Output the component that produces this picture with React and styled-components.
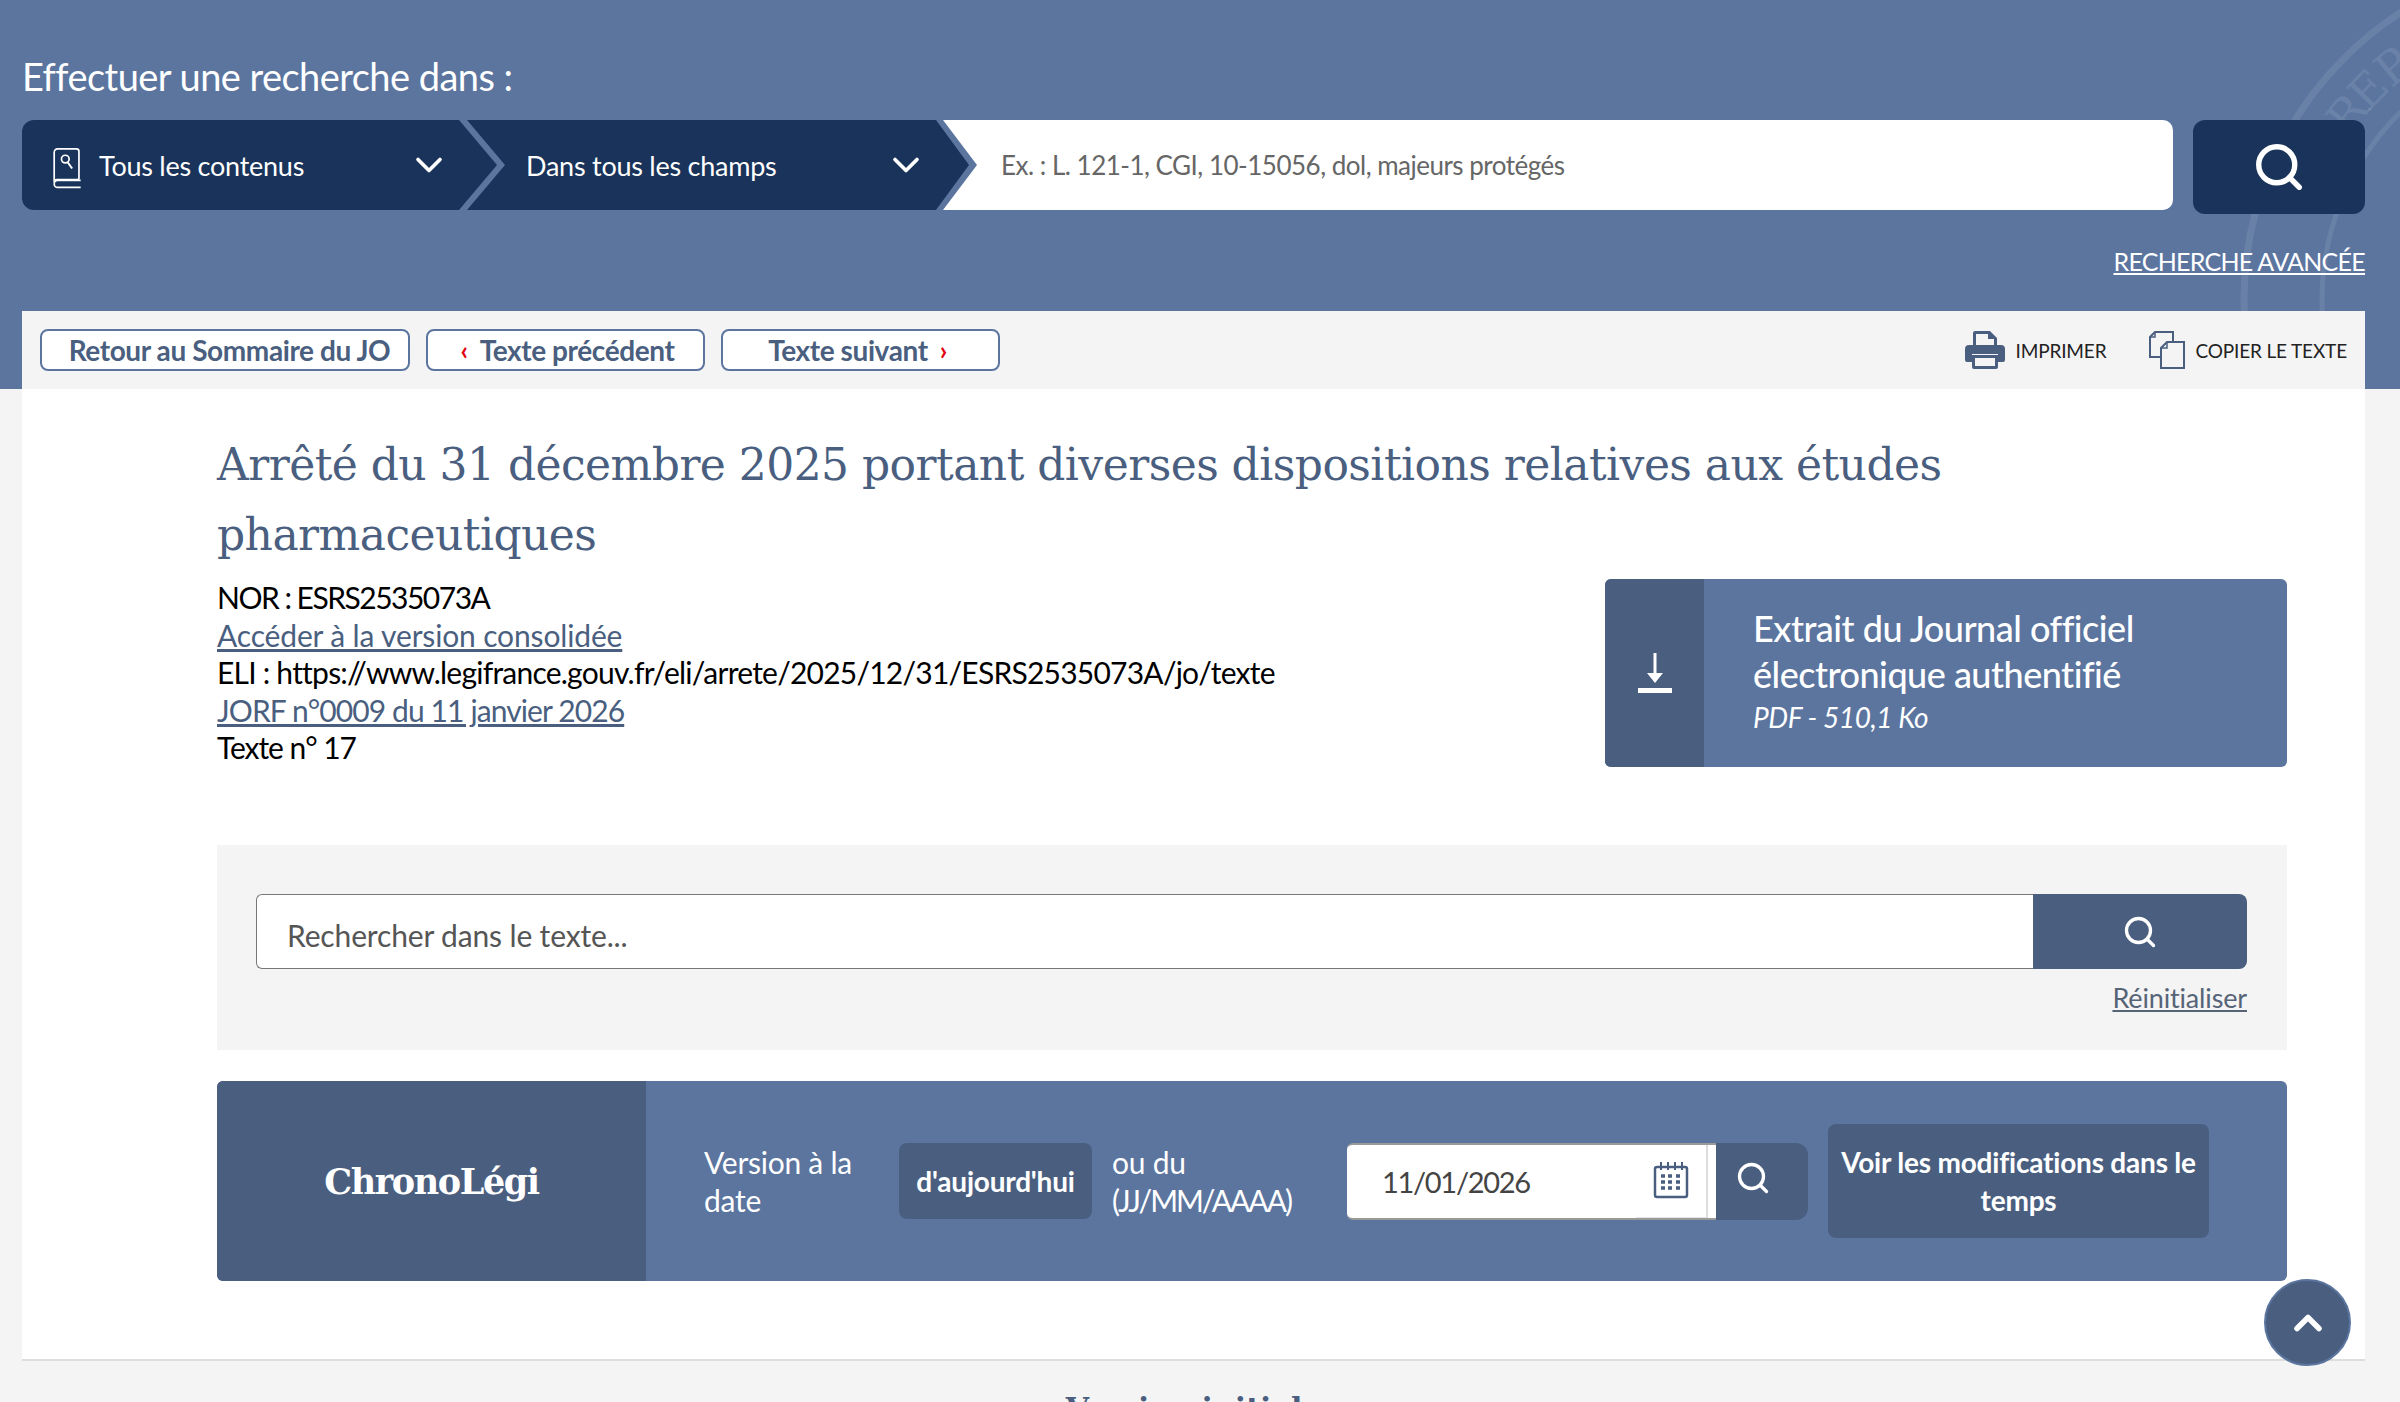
import React from 'react';
import styled, { createGlobalStyle } from 'styled-components';
import { ChevronDown, ChevronUp, Search } from 'lucide-react';

const blue = '#5b759f';
const slate = '#4a5f80';
const navy = '#19335a';
const pale = '#f4f4f4';

const sealLetters = [['R', 38], ['E', 44], ['P', 50.4]];

const GlobalStyle = createGlobalStyle`
    html, body {
        margin: 0;
        padding: 0;
        background: ${pale};
    }
    * {
        box-sizing: border-box;
    }
`;

const Page = styled.div`
    position: relative;
    width: 2400px;
    height: 1402px;
    overflow: hidden;
    background: ${pale};
    font-family: Lato, "Noto Sans", sans-serif;
`;

const Header = styled.header`
    position: relative;
    height: 389px;
    padding: 53px 0 0 22px;
    background: ${blue};
    display: flex;
    flex-direction: column;
    overflow: hidden;
`;

const Seal = styled.svg`
    position: absolute;
    top: 0;
    left: 2200px;
    width: 200px;
    height: 389px;
    fill: none;
    stroke: rgba(255, 255, 255, 0.09);
`;

const SealText = styled.text`
    fill: rgba(255, 255, 255, 0.1);
    stroke: none;
    font-family: "DejaVu Serif", serif;
    font-size: 46px;
    text-anchor: middle;
`;

const Heading = styled.h2`
    position: relative;
    margin: 0;
    height: 46px;
    font-size: 38px;
    line-height: 46px;
    font-weight: 400;
    letter-spacing: -0.55px;
    color: #fff;
`;

const SearchRow = styled.div`
    position: relative;
    display: flex;
    align-items: flex-start;
    margin-top: 21px;
    width: 2343px;
`;

const Segment = styled.div`
    display: flex;
    align-items: center;
    flex: none;
    height: 90px;
    width: ${(p) => p.$width}px;
    margin-left: ${(p) => (p.$first ? 0 : -30)}px;
    padding: 0 ${(p) => p.$right}px 0 ${(p) => p.$left}px;
    background: ${navy};
    color: #fff;
    font-size: 27px;
    letter-spacing: -0.25px;
    border-radius: ${(p) => (p.$first ? '12px 0 0 12px' : 0)};
    clip-path: ${(p) => (p.$first
        ? 'polygon(0 0, calc(100% - 38px) 0, 100% 50%, calc(100% - 38px) 100%, 0 100%)'
        : 'polygon(0 0, calc(100% - 33px) 0, 100% 50%, calc(100% - 33px) 100%, 0 100%, 38px 50%)')};
    svg.book {
        margin-top: 6px;
    }
`;

const SegmentLabel = styled.span`
    flex: 1;
    margin-left: ${(p) => p.$gap || 0}px;
`;

const QueryInput = styled.input`
    flex: 1;
    height: 90px;
    margin-left: -26px;
    padding: 0 0 0 58px;
    border: 0;
    border-radius: 0 10px 10px 0;
    background: #fff;
    font-family: inherit;
    font-size: 26px;
    letter-spacing: -0.5px;
    clip-path: polygon(0 0, 100% 0, 100% 100%, 0 100%, 34px 50%);
    &::placeholder {
        color: #666;
        opacity: 1;
    }
`;

const GoButton = styled.button`
    flex: none;
    width: 172px;
    height: 94px;
    margin-left: 20px;
    border: 0;
    border-radius: 12px;
    background: ${navy};
    color: #fff;
    display: flex;
    align-items: center;
    justify-content: center;
`;

const AdvancedLink = styled.a`
    position: relative;
    align-self: flex-end;
    margin: 30px 35px 0 0;
    font-size: 25px;
    line-height: 34px;
    letter-spacing: -0.73px;
    color: #fff;
    text-decoration: underline;
`;

const Toolbar = styled.div`
    position: relative;
    display: flex;
    align-items: center;
    width: 2343px;
    height: 78px;
    margin-top: auto;
    padding: 0 18px;
    background: ${pale};
`;

const PillButton = styled.a`
    display: flex;
    align-items: center;
    justify-content: center;
    gap: 12px;
    width: ${(p) => p.$width}px;
    height: 42px;
    margin-right: 16px;
    padding: ${(p) => p.$pad || '0'};
    border: 2px solid ${blue};
    border-radius: 8px;
    background: #fff;
    color: ${slate};
    font-size: 28px;
    font-weight: 700;
    letter-spacing: -0.4px;
`;

const RedArrow = styled.span`
    color: #e1000f;
    font-size: 26px;
    font-weight: 700;
`;

const ToolLink = styled.a`
    display: flex;
    align-items: center;
    gap: 10px;
    margin-left: ${(p) => p.$gap || 0}px;
    color: #222;
    font-size: 19px;
    letter-spacing: -0.15px;
`;

const Spacer = styled.div`
    flex: 1;
`;

const Main = styled.main`
    width: 2343px;
    height: 970px;
    margin-left: 22px;
    padding: 41px 78px 0 195px;
    background: #fff;
`;

const Title = styled.h1`
    margin: 0;
    width: 1800px;
    font-family: "DejaVu Serif", serif;
    font-size: 44px;
    line-height: 70px;
    font-weight: 400;
    letter-spacing: -0.55px;
    color: ${slate};
`;

const MetaRow = styled.div`
    display: flex;
    justify-content: space-between;
    margin-top: 9px;
`;

const Meta = styled.div`
    font-size: 30px;
    line-height: 37.6px;
    color: #000;
`;

const MetaLine = styled.div`
    letter-spacing: ${(p) => p.$ls}px;
`;

const MetaLink = styled.a`
    display: block;
    color: ${slate};
    letter-spacing: ${(p) => p.$ls}px;
    text-decoration: underline;
`;

const Download = styled.a`
    display: flex;
    width: 682px;
    height: 188px;
    border-radius: 6px;
    overflow: hidden;
    background: ${blue};
    color: #fff;
`;

const DownloadIcon = styled.div`
    flex: none;
    width: 99px;
    display: flex;
    align-items: center;
    justify-content: center;
    background: ${slate};
`;

const DownloadText = styled.div`
    padding: 26px 0 0 49px;
    font-size: 36px;
    line-height: 46px;
    font-weight: 500;
    letter-spacing: -0.5px;
`;

const DownloadSub = styled.div`
    font-size: 28px;
    line-height: 40px;
    font-style: italic;
    font-weight: 400;
    letter-spacing: -0.45px;
`;

const FindPanel = styled.section`
    height: 205px;
    margin-top: 78px;
    padding: 49px 40px 0 39px;
    background: ${pale};
`;

const FindRow = styled.div`
    display: flex;
    height: 75px;
`;

const FindInput = styled.input`
    flex: 1;
    min-width: 0;
    padding: 6px 30px 0;
    border: 1px solid #777;
    border-right: 0;
    border-radius: 6px 0 0 6px;
    background: #fff;
    font-family: inherit;
    font-size: 30px;
    letter-spacing: -0.15px;
    &::placeholder {
        color: #555;
        opacity: 1;
    }
`;

const FindButton = styled.button`
    flex: none;
    width: 214px;
    border: 0;
    border-radius: 0 8px 8px 0;
    background: ${slate};
    color: #fff;
    display: flex;
    align-items: center;
    justify-content: center;
`;

const ResetLink = styled.a`
    display: block;
    margin-top: 12px;
    text-align: right;
    font-size: 27px;
    line-height: 34px;
    letter-spacing: -0.15px;
    color: #566478;
    text-decoration: underline;
`;

const Chrono = styled.section`
    display: flex;
    align-items: center;
    height: 200px;
    margin-top: 31px;
    border-radius: 6px;
    overflow: hidden;
    background: ${blue};
    color: #fff;
`;

const ChronoName = styled.div`
    flex: none;
    align-self: stretch;
    width: 429px;
    display: flex;
    align-items: center;
    justify-content: center;
    background: ${slate};
    font-family: "DejaVu Serif", serif;
    font-size: 35px;
    font-weight: 700;
    letter-spacing: -1.4px;
`;

const ChronoLabel = styled.div`
    flex: none;
    width: ${(p) => p.$width}px;
    margin-left: ${(p) => p.$left}px;
    font-size: 30px;
    line-height: 38px;
    letter-spacing: -0.25px;
`;

const TightText = styled.span`
    letter-spacing: -2px;
`;

const DarkButton = styled.button`
    flex: none;
    display: block;
    width: ${(p) => p.$width}px;
    height: ${(p) => p.$height}px;
    margin-left: ${(p) => p.$left}px;
    padding: 0;
    border: 0;
    border-radius: 8px;
    background: ${slate};
    color: #fff;
    font-family: inherit;
    font-size: 28px;
    line-height: 38px;
    font-weight: 700;
    letter-spacing: -0.2px;
`;

const DateBox = styled.div`
    flex: none;
    display: flex;
    width: 369px;
    height: 77px;
    margin-left: 35px;
    padding-right: 8px;
    border-radius: 6px 0 0 6px;
    overflow: hidden;
    background: #fff;
    border-top: 2px solid #999;
    border-bottom: 2px solid #999;
`;

const DateValue = styled.div`
    flex: 1;
    padding-left: 35px;
    color: #444;
    font-size: 29px;
    line-height: 73px;
    letter-spacing: -1.3px;
`;

const CalendarCell = styled.div`
    flex: none;
    width: 72px;
    display: flex;
    align-items: center;
    justify-content: center;
    margin: -2px 0;
    border-right: 2px solid #ddd;
    border-bottom: 3px solid #e6e6e6;
    background: #fff;
`;

const DateGo = styled.button`
    flex: none;
    width: 92px;
    height: 77px;
    padding: 0 18px 6px 0;
    border: 0;
    border-radius: 0 12px 12px 0;
    background: ${slate};
    color: #fff;
    display: flex;
    align-items: center;
    justify-content: center;
`;

const Footer = styled.footer`
    height: 60px;
    width: 2343px;
    margin-left: 22px;
    padding-top: 30px;
    border-top: 2px solid #ddd;
    background: ${pale};
    text-align: center;
    font-family: "DejaVu Serif", serif;
    font-size: 30px;
    font-weight: 700;
    color: ${slate};
`;

const ScrollTop = styled.button`
    position: absolute;
    left: 2264px;
    top: 1279px;
    width: 87px;
    height: 87px;
    padding: 0;
    border: 2px solid ${blue};
    border-radius: 50%;
    background: ${slate};
    color: #fff;
    display: flex;
    align-items: center;
    justify-content: center;
`;

const BookIcon = () => (
    <svg className="book" width="32" height="41" viewBox="0 0 34 48" fill="none" stroke="#fff" strokeWidth="2">
        <path d="M6 1h22a3 3 0 0 1 3 3v31a2 2 0 0 1-2 2H5a3 3 0 0 0-3 3V5a4 4 0 0 1 4-4z" />
        <path d="M33 38H6a4 4 0 0 0 0 8h27" />
        <circle cx="15" cy="13" r="4.5" />
        <path d="M18 17l5 7" strokeWidth="2.4" />
    </svg>
);

const PrinterIcon = () => (
    <svg width="40" height="38" viewBox="0 0 40 38" fill={slate}>
        <path d="M8 2a2 2 0 0 1 2-2h15l7 7v7h-3V8h-6V3H11v11H8z" />
        <path d="M4 14h32a4 4 0 0 1 4 4v11a2 2 0 0 1-2 2h-5v-8H7v8H2a2 2 0 0 1-2-2V18a4 4 0 0 1 4-4z" />
        <path d="M7 24h26v12a2 2 0 0 1-2 2H9a2 2 0 0 1-2-2zm3 3v8h20v-8z" fillRule="evenodd" />
    </svg>
);

const CopyIcon = () => (
    <svg width="36" height="38" viewBox="0 0 36 38" fill="none" stroke={slate} strokeWidth="2">
        <path d="M24 11V1H6L1 6v20h11" />
        <path d="M1 6h5V1" strokeWidth="1.5" />
        <path d="M18 11h17v26H12V17z" fill={pale} />
        <path d="M12 17h6v-6" strokeWidth="1.5" />
    </svg>
);

const DownloadGlyph = () => (
    <svg width="34" height="40" viewBox="0 0 34 40" fill="#fff">
        <rect x="15.5" y="0" width="3" height="24" />
        <path d="M9 20h16l-8 10z" />
        <rect x="0" y="35" width="34" height="5" />
    </svg>
);

const CalendarIcon = () => (
    <svg width="36" height="38" viewBox="0 0 36 38" fill="none" stroke={slate}>
        <rect x="2" y="6" width="32" height="30" rx="2" strokeWidth="2.5" />
        <path d="M8 1v8M15 1v8M22 1v8M29 1v8" strokeWidth="2" />
        <path
            d="M8 15h4M15 15h4M23 15h4M8 21h4M15 21h4M23 21h4M8 27h4M15 27h4M23 27h4"
            strokeWidth="3.5"
        />
    </svg>
);

// letters sit one by one on the ring of the seal, angle counted from its left
const sealPlace = (deg) => {
    const rad = (deg * Math.PI) / 180;
    const x = 2586 - 287 * Math.cos(rad);
    const y = 300 - 287 * Math.sin(rad);
    return `translate(${x} ${y}) rotate(${deg - 90})`;
};

const App = () => (
    <Page>
        <GlobalStyle />
        <Header>
            <Seal viewBox="2200 0 200 389">
                <circle cx="2586" cy="300" r="342" strokeWidth="7" />
                <circle cx="2586" cy="300" r="264" strokeWidth="5" />
                {sealLetters.map(([letter, deg]) => (
                    <SealText key={letter} transform={sealPlace(deg)}>{letter}</SealText>
                ))}
            </Seal>
            <Heading>Effectuer une recherche dans :</Heading>
            <SearchRow>
                <Segment $first $width={475} $left={29} $right={46}>
                    <BookIcon />
                    <SegmentLabel $gap={16}>Tous les contenus</SegmentLabel>
                    <ChevronDown size={44} strokeWidth={2} />
                </Segment>
                <Segment $width={502} $left={59} $right={41}>
                    <SegmentLabel>Dans tous les champs</SegmentLabel>
                    <ChevronDown size={44} strokeWidth={2} />
                </Segment>
                <QueryInput placeholder="Ex. : L. 121-1, CGI, 10-15056, dol, majeurs protégés" />
                <GoButton><Search size={54} strokeWidth={2.4} /></GoButton>
            </SearchRow>
            <AdvancedLink>RECHERCHE AVANCÉE</AdvancedLink>
            <Toolbar>
                <PillButton $width={370} $pad="0 0 0 9px">Retour au Sommaire du JO</PillButton>
                <PillButton $width={279} $pad="0 0 0 4px"><RedArrow>‹</RedArrow>Texte précédent</PillButton>
                <PillButton $width={279} $pad="0 6px 0 0">Texte suivant<RedArrow>›</RedArrow></PillButton>
                <Spacer />
                <ToolLink><PrinterIcon />IMPRIMER</ToolLink>
                <ToolLink $gap={43}><CopyIcon />COPIER LE TEXTE</ToolLink>
            </Toolbar>
        </Header>
        <Main>
            <Title>Arrêté du 31 décembre 2025 portant diverses dispositions relatives aux études pharmaceutiques</Title>
            <MetaRow>
                <Meta>
                    <MetaLine $ls={-1.5}>NOR : ESRS2535073A</MetaLine>
                    <MetaLink $ls={-0.15}>Accéder à la version consolidée</MetaLink>
                    <MetaLine $ls={-0.77}>ELI : https://www.legifrance.gouv.fr/eli/arrete/2025/12/31/ESRS2535073A/jo/texte</MetaLine>
                    <MetaLink $ls={-0.9}>JORF n°0009 du 11 janvier 2026</MetaLink>
                    <MetaLine $ls={-1.05}>Texte n° 17</MetaLine>
                </Meta>
                <Download>
                    <DownloadIcon><DownloadGlyph /></DownloadIcon>
                    <DownloadText>
                        Extrait du Journal officiel<br />
                        électronique authentifié
                        <DownloadSub>PDF - 510,1 Ko</DownloadSub>
                    </DownloadText>
                </Download>
            </MetaRow>
            <FindPanel>
                <FindRow>
                    <FindInput placeholder="Rechercher dans le texte..." />
                    <FindButton><Search size={36} strokeWidth={2.2} /></FindButton>
                </FindRow>
                <ResetLink>Réinitialiser</ResetLink>
            </FindPanel>
            <Chrono>
                <ChronoName>ChronoLégi</ChronoName>
                <ChronoLabel $width={165} $left={58}>Version à la date</ChronoLabel>
                <DarkButton $width={193} $height={76} $left={30}>d'aujourd'hui</DarkButton>
                <ChronoLabel $width={200} $left={20}>ou du <TightText>(JJ/MM/AAAA)</TightText></ChronoLabel>
                <DateBox>
                    <DateValue>11/01/2026</DateValue>
                    <CalendarCell><CalendarIcon /></CalendarCell>
                </DateBox>
                <DateGo><Search size={36} strokeWidth={2.2} /></DateGo>
                <DarkButton $width={381} $height={114} $left={20}>Voir les modifications dans le temps</DarkButton>
            </Chrono>
        </Main>
        <Footer>Version initiale</Footer>
        <ScrollTop><ChevronUp size={44} strokeWidth={3} /></ScrollTop>
    </Page>
);

export default App;
